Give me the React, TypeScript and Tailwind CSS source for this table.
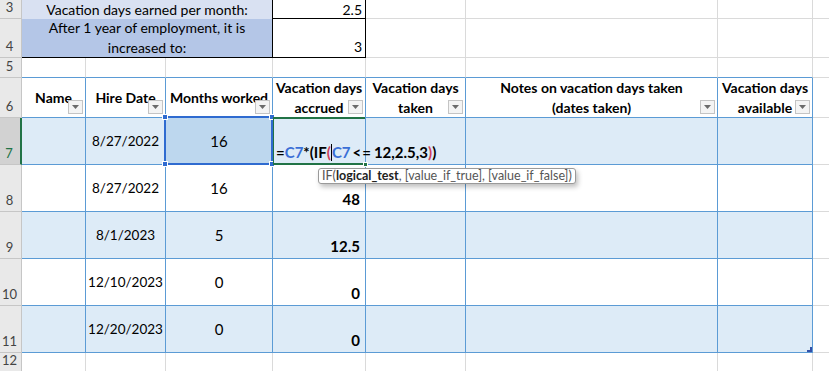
import React from "react";

const FONT = { fontFamily: "Lato, 'Liberation Sans', sans-serif" };

function RowNum({ n, active }: { n: number; active?: boolean }) {
  return (
    <div
      className={
        active
          ? "flex items-end justify-center pr-[2px] pb-[1px] bg-[#d2d2d2] border-b border-[#c6c6c6] border-r-2 border-r-[#217346] text-[13px] text-[#217346]"
          : "flex items-end justify-center pr-[2px] pb-[1px] bg-[#e9e9e9] border-b border-r border-[#c6c6c6] text-[13px] text-[#444]"
      }
    >
      {n}
    </div>
  );
}

function Filter() {
  return (
    <div className="absolute right-[2px] bottom-[3px] w-[15px] h-[14px] border border-[#c4c4c4] bg-[#f4f4f4] flex items-center justify-center">
      <svg width="7" height="4" viewBox="0 0 7 4">
        <path d="M0 0 L7 0 L3.5 4 Z" fill="#6b6b6b" />
      </svg>
    </div>
  );
}

const grid = "border-r border-b border-[#dadada]";
const tb = "border-r border-b border-[#5b9bd5]";

const rows = [
  { n: 8, date: "8/27/2022", months: "16", acc: "48", band: false },
  { n: 9, date: "8/1/2023", months: "5", acc: "12.5", band: true },
  { n: 10, date: "12/10/2023", months: "0", acc: "0", band: false },
  { n: 11, date: "12/20/2023", months: "0", acc: "0", band: true },
];

export default function App() {
  return (
    <div className="w-[829px] h-[371px] overflow-hidden bg-white text-black" style={FONT}>
      <div className="grid grid-cols-[22px_64px_80px_107px_93px_100px_252px_95px_17px] grid-rows-[19px_39px_20px_40px_47px_47px_47px_47px_47px_19px] text-[14px] leading-[19px]">
        {/* row 3 */}
        <RowNum n={3} />
        <div className="col-span-3 bg-[#d9e1f2] border-r border-black flex items-center justify-center">
          Vacation days earned per month:
        </div>
        <div className="border-r border-b border-black flex items-center justify-end pr-[3px]">2.5</div>
        <div className={grid} />
        <div className={grid} />
        <div className={grid} />
        <div className={grid} />

        {/* row 4 */}
        <RowNum n={4} />
        <div className="col-span-3 bg-[#b4c6e7] border-r border-b border-black flex flex-col items-center justify-center leading-[20px]">
          <span>After 1 year of employment, it is</span>
          <span>increased to:</span>
        </div>
        <div className="border-r border-b border-black flex items-end justify-end pr-[3px] pb-[1px]">3</div>
        <div className={grid} />
        <div className={grid} />
        <div className={grid} />
        <div className={grid} />

        {/* row 5 */}
        <RowNum n={5} />
        <div className="border-r border-[#dadada] border-b border-b-[#5b9bd5]" />
        <div className="border-r border-[#dadada] border-b border-b-[#5b9bd5]" />
        <div className="border-r border-[#dadada] border-b border-b-[#5b9bd5]" />
        <div className="border-r border-[#dadada] border-b border-b-[#5b9bd5]" />
        <div className="border-r border-[#dadada] border-b border-b-[#5b9bd5]" />
        <div className="border-r border-[#dadada] border-b border-b-[#5b9bd5]" />
        <div className="border-r border-[#dadada] border-b border-b-[#5b9bd5]" />
        <div className={grid} />

        {/* row 6: table header */}
        <RowNum n={6} />
        {[
          ["Name"],
          ["Hire Date"],
          ["Months worked"],
          ["Vacation days", "accrued"],
          ["Vacation days", "taken"],
          ["Notes on vacation days taken", "(dates taken)"],
          ["Vacation days", "available"],
        ].map((lines, i) => (
          <div
            key={i}
            className={`${tb} relative overflow-hidden flex flex-col items-center justify-center font-bold leading-[20px] pt-[1px]`}
          >
            {lines.map((l) => (
              <span key={l} className="whitespace-nowrap">{l}</span>
            ))}
            <Filter />
          </div>
        ))}
        <div className={grid} />

        {/* row 7: editing row */}
        <RowNum n={7} active />
        <div className={`${tb} bg-[#ddebf7]`} />
        <div className={`${tb} bg-[#ddebf7] flex items-center justify-center text-[13.5px]`}>8/27/2022</div>
        <div className={`${tb} relative bg-[#bdd7ee] flex items-center justify-center text-[15px]`}>
          16
          <div className="absolute -left-[2px] -top-[2px] -right-[1px] -bottom-[1px] border-2 border-[#2f6bd0]" />
          <div className="absolute -left-[4px] -top-[4px] w-[6px] h-[6px] bg-[#2f6bd0] border border-white" />
          <div className="absolute -right-[3px] -top-[4px] w-[6px] h-[6px] bg-[#2f6bd0] border border-white" />
          <div className="absolute -left-[4px] -bottom-[3px] w-[6px] h-[6px] bg-[#2f6bd0] border border-white" />
          <div className="absolute -right-[3px] -bottom-[3px] w-[6px] h-[6px] bg-[#2f6bd0] border border-white" />
        </div>
        <div className={`${tb} relative bg-[#ddebf7]`}>
          <div className="absolute left-0 -top-[1px] right-0 -bottom-[1px] border-t-2 border-b-2 border-l border-[#217346]" />
          <div className="absolute -right-[3px] -bottom-[3px] w-[5px] h-[5px] bg-[#217346] border border-white" />
          <div className="absolute left-[3px] bottom-[2px] z-10 whitespace-nowrap font-bold text-[15px] leading-[20px] flex items-center">
            <span>=</span>
            <span className="text-[#3a6fd6]">C7</span>
            <span>*(IF</span>
            <span className="text-[#d0405a]">(</span>
            <span className="inline-block w-px h-[17px] bg-black" />
            <span className="text-[#3a6fd6]">C7</span>
            <span className="px-[2px] tracking-[1px]">&lt;=</span>
            <span>12,2.5,3</span>
            <span className="text-[#d0405a]">)</span>
            <span>)</span>
          </div>
          <div className="absolute left-[45px] top-[50px] z-20 whitespace-nowrap rounded-[3px] border border-[#9a9a9a] bg-white px-[3px] text-[12.5px] leading-[14px] text-[#555] shadow-[2px_3px_5px_rgba(0,0,0,0.25)]">
            IF(<span className="font-bold text-[#222]">logical_test</span>, [value_if_true], [value_if_false])
          </div>
        </div>
        <div className={`${tb} bg-[#ddebf7]`} />
        <div className={`${tb} bg-[#ddebf7]`} />
        <div className={`${tb} bg-[#ddebf7]`} />
        <div className={grid} />

        {/* rows 8-11 */}
        {rows.map((r) => (
          <React.Fragment key={r.n}>
            <RowNum n={r.n} />
            <div className={r.band ? `${tb} bg-[#ddebf7]` : tb} />
            <div className={`${r.band ? `${tb} bg-[#ddebf7]` : tb} flex items-center justify-center text-[13.5px]`}>{r.date}</div>
            <div className={`${r.band ? `${tb} bg-[#ddebf7]` : tb} flex items-center justify-center text-[15px]`}>{r.months}</div>
            <div className={`${r.band ? `${tb} bg-[#ddebf7]` : tb} flex items-end justify-end pr-[5px] pb-[2px] font-bold text-[15px]`}>
              {r.acc}
            </div>
            <div className={r.band ? `${tb} bg-[#ddebf7]` : tb} />
            <div className={r.band ? `${tb} bg-[#ddebf7]` : tb} />
            <div className={`${r.band ? `${tb} bg-[#ddebf7]` : tb} relative`}>
              {r.n === 11 && (
                <svg className="absolute right-0 bottom-0" width="5" height="5" viewBox="0 0 5 5">
                  <path d="M5 0 L5 5 L0 5 L0 3 L3 3 L3 0 Z" fill="#3451a8" />
                </svg>
              )}
            </div>
            <div className={grid} />
          </React.Fragment>
        ))}

        {/* row 12 */}
        <RowNum n={12} />
        <div className={grid} />
        <div className={grid} />
        <div className={grid} />
        <div className={grid} />
        <div className={grid} />
        <div className={grid} />
        <div className={grid} />
        <div className={grid} />
      </div>
    </div>
  );
}
